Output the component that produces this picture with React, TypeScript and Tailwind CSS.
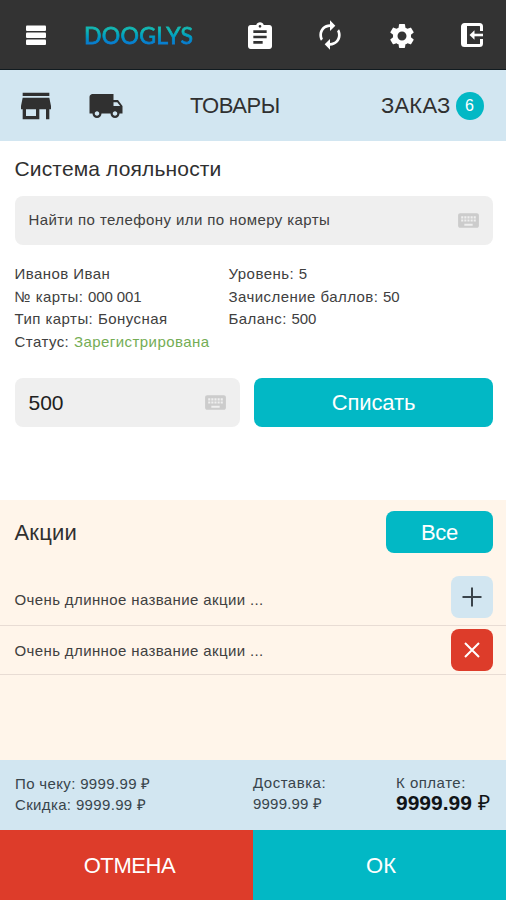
import React from "react";
import { clsx } from "clsx";
import { MdAssignment, MdAutorenew, MdKeyboard, MdLocalShipping, MdSettings, MdStore } from "react-icons/md";

type InfoRow = { label: string; value?: string; color?: string };

const CUSTOMER_LEFT: InfoRow[] = [
  { label: "Иванов Иван" },
  { label: "№ карты:", value: "000 001", color: "tracking-[-0.1px]" },
  { label: "Тип карты:", value: "Бонусная" },
  { label: "Статус:", value: "Зарегистрирована", color: "text-[#74ad55]" },
];

const CUSTOMER_RIGHT: InfoRow[] = [
  { label: "Уровень:", value: "5" },
  { label: "Зачисление баллов:", value: "50", color: "tracking-[-0.1px]" },
  { label: "Баланс:", value: "500", color: "tracking-[-0.1px]" },
];

const PROMOS = [
  { id: 1, name: "Очень длинное название акции ...", applied: false },
  { id: 2, name: "Очень длинное название акции ...", applied: true },
];

function InfoList({ rows }: { rows: InfoRow[] }) {
  return (
    <div className="text-[15px] leading-[22.7px] tracking-[0.45px] text-[#404040]">
      {rows.map((row) => (
        <div key={row.label}>
          {row.label} {row.value && <span className={row.color}>{row.value}</span>}
        </div>
      ))}
    </div>
  );
}

function MenuIcon() {
  return (
    <svg viewBox="0 0 20 21" className="h-[21px] w-5 fill-white">
      <rect y="0.5" width="20" height="5.5" rx="1" />
      <rect y="7.5" width="20" height="5.5" rx="1" />
      <rect y="14.5" width="20" height="5.5" rx="1" />
    </svg>
  );
}

function ExitIcon() {
  return (
    <svg viewBox="0 0 22 24" className="h-6 w-[22px]" fill="none" stroke="white" strokeWidth="3">
      <path d="M20.5 8V3.5a2 2 0 0 0-2-2h-15a2 2 0 0 0-2 2v17a2 2 0 0 0 2 2h15a2 2 0 0 0 2-2V16" />
      <path d="M2 1.5h4v21H2z" fill="white" stroke="none" />
      <path d="M22 12H12" strokeWidth="2.600" />
      <path d="M8.500 12l5-4.800v9.600z" fill="white" stroke="none" />
    </svg>
  );
}

function Header() {
  return (
    <header className="flex h-[70px] shrink-0 items-center border-b border-[#111b20] bg-[#333333] pl-[26px] pt-[2px] text-white">
      <MenuIcon />
      <div className="-mt-[1px] ml-[38px] w-[150px] bg-gradient-to-b from-[#12b8b4] from-35% to-[#087fd0] to-75% bg-clip-text font-['Lato'] text-[23px] leading-[30px] tracking-[0.3px] text-transparent [-webkit-text-stroke:0.8px_transparent]">
        DOOGLYS
      </div>
      <MdAssignment className="ml-[10px] mt-[2px] size-8" />
      <MdAutorenew className="-mt-[1px] ml-[38px] size-8" />
      <MdSettings className="ml-[41px] size-[30px]" />
      <div className="-mt-[1px] ml-[44px]">
        <ExitIcon />
      </div>
    </header>
  );
}

function Tabs() {
  return (
    <nav className="flex h-[71px] shrink-0 items-center bg-[#d2e6f1] pl-[15.5px] text-[#303030]">
      <MdStore className="mt-[1px] size-10" />
      <MdLocalShipping className="ml-8 mt-[1px] size-9" />
      <span className="ml-[66.5px] w-[191px] text-[22px] tracking-[-0.4px]">ТОВАРЫ</span>
      <span className="w-[74.5px] text-[22px] tracking-[0.2px]">ЗАКАЗ</span>
      <span className="flex size-7 items-center justify-center rounded-full bg-[#02b8c5] text-[16px] text-white">6</span>
    </nav>
  );
}

function Loyalty() {
  return (
    <section className="h-[359px] shrink-0 pl-[14.5px] pr-[13.5px] pt-[13px]">
      <h1 className="text-[21px] leading-[30px] tracking-[0.15px] text-[#303030]">Система лояльности</h1>
      <div className="mt-[12px] flex h-[49px] items-center justify-between rounded-lg bg-[#efefef] px-[14px] text-[15px] tracking-[0.42px] text-[#404040]">
        <span>Найти по телефону или по номеру карты</span>
        <MdKeyboard className="-mr-[2px] size-[25px] text-[#cccccc]" />
      </div>
      <div className="mt-[18px] grid grid-cols-[214px_1fr]">
        <InfoList rows={CUSTOMER_LEFT} />
        <InfoList rows={CUSTOMER_RIGHT} />
      </div>
      <div className="mt-[24px] flex gap-[14px]">
        <div className="flex h-[49px] w-[225px] items-center justify-between rounded-lg bg-[#efefef] px-[14px] text-[21px] text-[#202020]">
          500
          <MdKeyboard className="-mr-[2px] size-[25px] text-[#cccccc]" />
        </div>
        <button className="h-[49px] flex-1 rounded-lg bg-[#02b8c5] pl-[1px] text-[22px] tracking-[-0.1px] text-white">
          Списать
        </button>
      </div>
    </section>
  );
}

function Promos() {
  return (
    <section className="h-[260px] shrink-0 bg-[#fff5ea] pt-[11px]">
      <div className="flex items-center justify-between pl-[14.5px] pr-[13.5px]">
        <h2 className="text-[22px] tracking-[0.2px] text-[#303030]">Акции</h2>
        <button className="h-[42px] w-[107px] rounded-lg bg-[#02b8c5] pl-[1px] text-[22px] tracking-[-0.3px] text-white">
          Все
        </button>
      </div>
      <ul className="mt-[20px]">
        {PROMOS.map((promo) => (
          <li
            key={promo.id}
            className={clsx(
              "flex items-center justify-between border-b border-[#e8dcd4] pl-[14.5px] pr-[13.5px]",
              promo.applied ? "h-[49px]" : "h-[53px]"
            )}
          >
            <span className="pt-[2px] text-[15px] tracking-[0.38px] text-[#404040]">{promo.name}</span>
            <button
              className={clsx(
                "flex size-[42px] items-center justify-center rounded-lg",
                promo.applied ? "bg-[#dd3c2a] text-white" : "mb-[5px] bg-[#d2e6f1] text-[#3a444b]"
              )}
            >
              <svg viewBox="0 0 20 20" className="size-5" stroke="currentColor" strokeWidth="2">
                <path d={promo.applied ? "M3 3l14 14M17 3L3 17" : "M0.500 10h19M10 0.500v19"} />
              </svg>
            </button>
          </li>
        ))}
      </ul>
    </section>
  );
}

function Summary() {
  return (
    <div className="flex h-[70px] shrink-0 bg-[#d2e6f1] pl-[15px] text-[15px] leading-[21px] text-[#38444c]">
      <div className="w-[238px] pt-[13px] tracking-[0.35px]">
        <p>По чеку: 9999.99 ₽</p>
        <p>Скидка: 9999.99 ₽</p>
      </div>
      <div className="w-[143px] pt-[12px]">
        <p className="tracking-[0.5px]">Доставка:</p>
        <p className="tracking-[0.2px]">9999.99 ₽</p>
      </div>
      <div className="pt-[12px]">
        <p className="tracking-[0.5px]">К оплате:</p>
        <p className="text-[21px] leading-[20px] text-[#101417]">
          <b>9999.99</b> ₽
        </p>
      </div>
    </div>
  );
}

export default function App() {
  return (
    <div className="flex h-[900px] w-[506px] flex-col overflow-hidden whitespace-nowrap bg-white font-['Liberation_Sans',Arial,sans-serif]">
      <Header />
      <Tabs />
      <Loyalty />
      <Promos />
      <Summary />
      <footer className="grid h-[70px] shrink-0 grid-cols-[253px_253px] text-[22px] text-white">
        <button className="bg-[#dd3c2a] pl-[6px] tracking-[-0.4px]">ОТМЕНА</button>
        <button className="bg-[#02b8c5] pl-[3px]">ОК</button>
      </footer>
    </div>
  );
}
